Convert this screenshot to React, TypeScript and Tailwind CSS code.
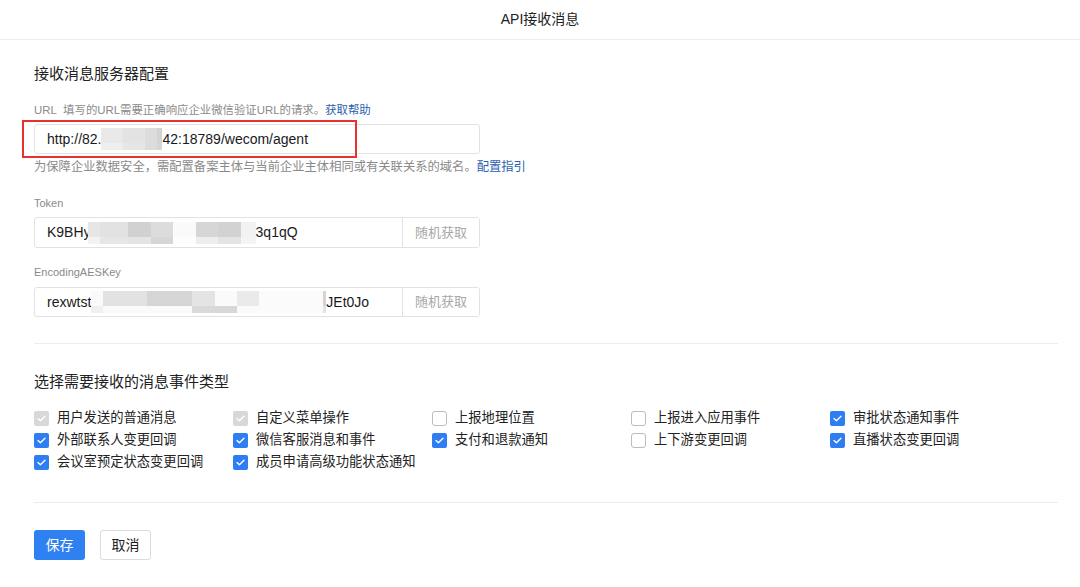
import React from 'react';

type Cell = [number, string, string];

const Mosaic: React.FC<{ cells: Cell[] }> = ({ cells }) => (
  <span className="inline-flex h-[22px] align-middle">
    {cells.map(([w, top, bottom], i) => (
      <span key={i} className="flex flex-col" style={{ width: w }}>
        <span className="h-[15px]" style={{ background: top }} />
        <span className="h-[7px]" style={{ background: bottom }} />
      </span>
    ))}
  </span>
);

type Item = { label: string; state: 'disabled' | 'checked' | 'unchecked' };

const items: Item[] = [
  { label: '用户发送的普通消息', state: 'disabled' },
  { label: '自定义菜单操作', state: 'disabled' },
  { label: '上报地理位置', state: 'unchecked' },
  { label: '上报进入应用事件', state: 'unchecked' },
  { label: '审批状态通知事件', state: 'checked' },
  { label: '外部联系人变更回调', state: 'checked' },
  { label: '微信客服消息和事件', state: 'checked' },
  { label: '支付和退款通知', state: 'checked' },
  { label: '上下游变更回调', state: 'unchecked' },
  { label: '直播状态变更回调', state: 'checked' },
  { label: '会议室预定状态变更回调', state: 'checked' },
  { label: '成员申请高级功能状态通知', state: 'checked' },
];

const Check: React.FC<{ state: Item['state'] }> = ({ state }) => {
  if (state === 'unchecked') {
    return <span className="w-[15px] h-[15px] rounded-[3px] border border-[#bcbcbc] bg-white shrink-0" />;
  }
  return (
    <span
      className={`w-[15px] h-[15px] rounded-[2px] flex items-center justify-center shrink-0 ${
        state === 'checked' ? 'bg-[#2f7df2]' : 'bg-[#d8d8d8]'
      }`}
    >
      <svg width="9" height="7" viewBox="0 0 9 7" fill="none">
        <path d="M1 3.6 3.4 5.8 8 1.2" stroke="white" strokeWidth="1.4" strokeLinecap="round" strokeLinejoin="round" />
      </svg>
    </span>
  );
};

const RandomButton = () => (
  <button className="w-[77px] h-full border-l border-[#e2e2e2] text-[13px] text-[#a8a8a8] bg-white shrink-0">
    随机获取
  </button>
);

export default function App() {
  return (
    <div
      className="w-[1080px] h-[587px] bg-white text-[#222] overflow-hidden"
      style={{ fontFamily: '"Liberation Sans", "Noto Sans CJK SC", sans-serif' }}
    >
      <div className="h-10 border-b border-[#ececec] flex items-center justify-center text-[14px] text-[#222]">
        API接收消息
      </div>

      <div className="px-[34px] pt-[23px] relative">
        {/* red annotation box */}
        <div className="absolute left-[22px] top-[80px] w-[335px] h-[38px] border-2 border-[#e8322f] pointer-events-none" />

        <h2 className="text-[15px] leading-[22px] text-[#222]">接收消息服务器配置</h2>

        <p className="mt-4 text-[11.4px] leading-[18px] text-[#8a8a8a]">
          URL&nbsp;&nbsp;填写的URL需要正确响应企业微信验证URL的请求。<span className="text-[#2b5fae]">获取帮助</span>
        </p>
        <div className="mt-[5px] w-[446px] h-[30px] border border-[#e2e2e2] rounded-[3px] flex items-center pl-3 text-[14px] text-[#1a1a1a]">
          <span>http://82.</span>
          <Mosaic cells={[[22, '#e9e9e9', '#eeeeee'], [22, '#e3e3e3', '#e6e6e6'], [12, '#dcdcdc', '#dcdcdc'], [5, '#d3d3d3', '#d6d6d6']]} />
          <span>42:18789/wecom/agent</span>
        </div>
        <p className="mt-1 text-[12.3px] leading-[18px] text-[#8a8a8a]">
          为保障企业数据安全，需配置备案主体与当前企业主体相同或有关联关系的域名。<span className="text-[#2b5fae]">配置指引</span>
        </p>

        <p className="mt-[18px] text-[11px] leading-[18px] text-[#8a8a8a]">Token</p>
        <div className="mt-[5px] w-[446px] h-[31px] border border-[#e2e2e2] rounded-[3px] flex items-center overflow-hidden text-[14px] text-[#1a1a1a]">
          <div className="flex-1 flex items-center pl-3">
            <span>K9BH</span>
            <span className="inline-block w-[4px] overflow-hidden">y</span>
            <Mosaic
              cells={[
                [12, '#e6e6e6', '#f3f3f3'],
                [28, '#e2e2e2', '#e6e6e6'],
                [23, '#d1d1d1', '#e4e4e4'],
                [22, '#dcdcdc', '#d6d6d6'],
                [23, '#fafafa', '#fdfdfd'],
                [22, '#d6d6d6', '#eeeeee'],
                [23, '#d2d2d2', '#e4e4e4'],
                [15, '#f2f2f2', '#f4f4f4'],
              ]}
            />
            <span>3q1qQ</span>
          </div>
          <RandomButton />
        </div>

        <p className="mt-[15px] text-[11px] leading-[18px] text-[#8a8a8a]">EncodingAESKey</p>
        <div className="mt-[6px] w-[446px] h-[30px] border border-[#e2e2e2] rounded-[3px] flex items-center overflow-hidden text-[14px] text-[#1a1a1a]">
          <div className="flex-1 flex items-center pl-3">
            <span>rexwtst</span>
            <Mosaic
              cells={[
                [12, '#fafafa', '#f0f0f0'],
                [44, '#e2e2e2', '#fafafa'],
                [45, '#d5d5d5', '#fafafa'],
                [23, '#e4e4e4', '#d9d9d9'],
                [22, '#fafafa', '#d8d8d8'],
                [22, '#eaeaea', '#fafafa'],
                [64, '#fbfbfb', '#fbfbfb'],
                [3, '#d4d4d4', '#e4e4e4'],
              ]}
            />
            <span>JEt0Jo</span>
          </div>
          <RandomButton />
        </div>

        <div className="mt-[26px] w-[1024px] h-px bg-[#ececec]" />

        <h2 className="mt-[27px] text-[15px] leading-[22px] text-[#222]">选择需要接收的消息事件类型</h2>

        <div className="mt-[14px] grid grid-cols-[repeat(5,199px)]">
          {items.map((it) => (
            <div key={it.label} className="h-[22px] flex items-center gap-[8px] text-[13.3px] text-[#222]">
              <Check state={it.state} />
              <span>{it.label}</span>
            </div>
          ))}
        </div>

        <div className="mt-[29px] w-[1024px] h-px bg-[#ececec]" />

        <div className="mt-[27px] flex gap-[15px]">
          <button className="w-[51px] h-[30px] rounded-[3px] bg-[#2f80f0] text-white text-[14px]">保存</button>
          <button className="w-[51px] h-[30px] rounded-[3px] border border-[#dcdcdc] bg-white text-[#222] text-[14px]">
            取消
          </button>
        </div>
      </div>
    </div>
  );
}
